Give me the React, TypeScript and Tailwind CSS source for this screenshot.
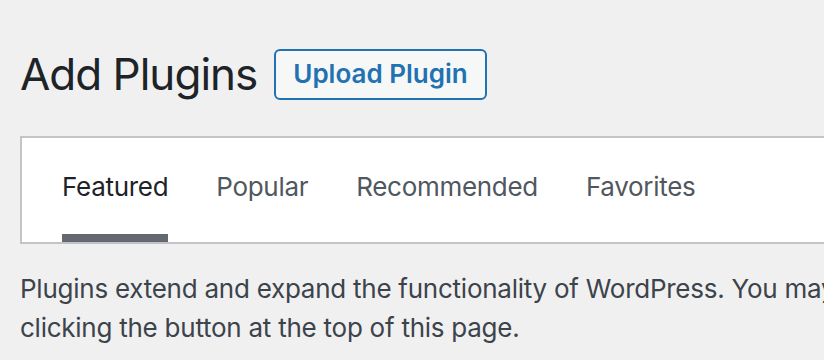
import React from 'react'

const tabs = ['Featured', 'Popular', 'Recommended', 'Favorites']

export default function App() {
    return (
        <div className="w-[824px] h-[360px] overflow-hidden bg-[#f0f0f1] font-['Inter',sans-serif]">
            <div className="w-[1400px] pl-[20px] pt-[44px]">
                <div className="flex items-center gap-[17px] h-[60px]">
                    <h1 className="text-[44px] leading-[60px] font-normal tracking-[-1px] text-[#1d2327]">Add Plugins</h1>
                    <button className="h-[51px] px-[17px] border-2 border-[#2271b1] rounded-[6px] bg-[#f6f7f7] text-[#2271b1] text-[26px] font-semibold leading-none">
                        Upload Plugin
                    </button>
                </div>

                <div className="mt-[32px] bg-white border-2 border-[#c3c4c7] flex gap-[48px] pl-[40px]">
                    {tabs.map((t, i) => (
                        <a
                            key={t}
                            href="#"
                            className={
                                i === 0
                                    ? 'pt-[29px] pb-[28px] border-b-8 border-[#646970] text-[26px] leading-[39px] tracking-[-0.3px] text-[#1d2327]'
                                    : 'pt-[29px] pb-[28px] border-b-8 border-white text-[26px] leading-[39px] tracking-[-0.3px] text-[#50575e]'
                            }
                        >
                            {t}
                        </a>
                    ))}
                </div>

                <p className="mt-[25px] text-[26px] leading-[39px] tracking-[-0.25px] text-[#3c434a] whitespace-nowrap">
                    Plugins extend and expand the functionality of WordPress. You may automatically install plugins from the WordPress Plugin Directory or upload a plugin in .zip format by
                    <br />
                    clicking the button at the top of this page.
                </p>
            </div>
        </div>
    )
}
